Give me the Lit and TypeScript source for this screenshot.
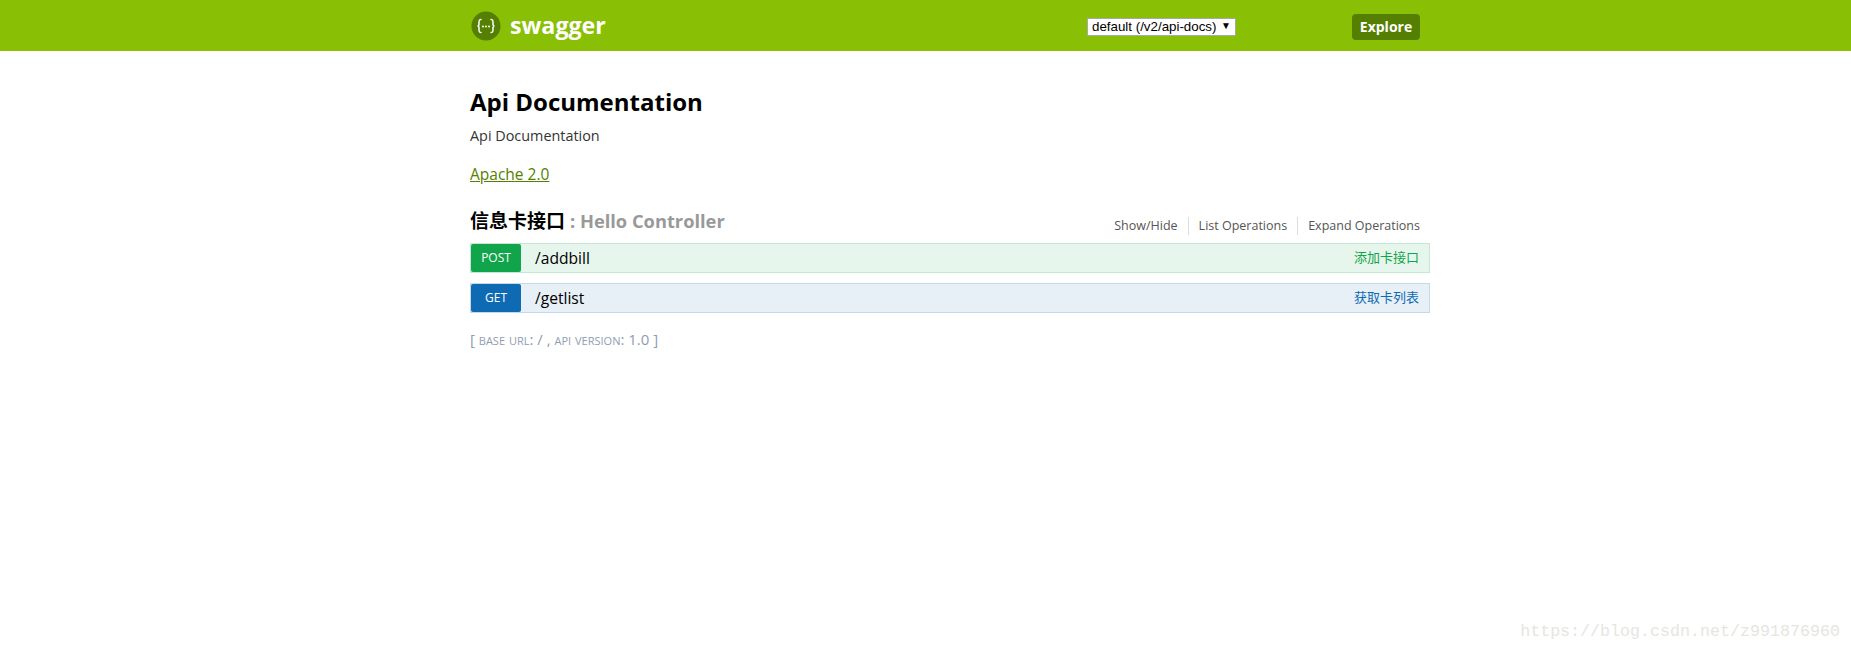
import { LitElement, html, css } from "lit";
import { customElement } from "lit/decorators.js";

@customElement("app-root")
export class AppRoot extends LitElement {
  static styles = css`
    :host {
      display: block;
      position: relative;
      min-height: 652px;
      background: #fff;
      font-family: "Open Sans", "Noto Sans", "Noto Sans CJK SC", sans-serif;
      color: #000;
      overflow: hidden;
    }
    .header {
      height: 51px;
      background: #89bf04;
      padding-left: 470px;
    }
    .header-in {
      width: 960px;
      height: 51px;
      display: flex;
      align-items: center;
      padding-left: 1px;
      box-sizing: border-box;
    }
    .logo { display: block; flex: none; }
    .brand {
      margin-left: 9px;
      color: #fff;
      font-size: 23.2px;
      font-weight: 700;
      line-height: 51px;
      margin-top: -1px;
      width: 577px;
    }
    .select {
      width: 149px;
      height: 18px;
      box-sizing: border-box;
      border: 1px solid #a9a9a9;
      background: #fff;
      font: 13.33px/16px "Liberation Sans", Arial, sans-serif;
      display: flex;
      justify-content: space-between;
      padding: 0 4px;
      margin-top: 3px;
      color: #000;
    }
    .arrow { font-size: 10px; line-height: 14px; }
    .explore {
      margin-left: 116px;
      width: 68px;
      height: 26px;
      border-radius: 4px;
      background: #547f00;
      color: #fff;
      font-size: 14px;
      font-weight: 700;
      line-height: 26px;
      text-align: center;
      margin-top: 3px;
    }
    .main { width: 960px; margin-left: 470px; padding-top: 34px; }
    h1 {
      margin: 0;
      font-size: 24px;
      font-weight: 700;
      line-height: 34px;
    }
    .desc { font-size: 14.4px; line-height: 20px; margin-top: 7px; color: #333; }
    .lic {
      display: inline-block;
      margin-top: 17px;
      font-size: 15.5px;
      line-height: 22px;
      color: #547f00;
      text-decoration: underline;
    }
    .res {
      display: flex;
      justify-content: space-between;
      align-items: flex-end;
      margin-top: 21px;
      height: 37px;
    }
    .res h2 { margin: 0; font-size: 19px; line-height: 26px; font-weight: 700; padding-bottom: 9px; }
    .res h2 span { color: #999; font-size: 18.3px; }
    .actions { display: flex; font-size: 12.5px; color: #555; line-height: 18px; padding-bottom: 8px; padding-right: 10px; }
    .actions span + span { border-left: 1px solid #ddd; margin-left: 10px; padding-left: 10px; }
    .op {
      display: flex;
      align-items: center;
      height: 30px;
      box-sizing: border-box;
      border: 1px solid;
    }
    .op + .op { margin-top: 10px; }
    .post { background: #e7f6ec; border-color: #c3e8d1; color: #10a54a; }
    .get { background: #e7f0f7; border-color: #c3d9ec; color: #0f6ab4; }
    .method {
      width: 50px;
      height: 28px;
      border-radius: 2px;
      color: #fff;
      font-size: 12px;
      line-height: 28px;
      text-align: center;
      flex: none;
    }
    .post .method { background: #10a54a; }
    .get .method { background: #0f6ab4; }
    .path { margin-left: 14px; font-size: 15.6px; color: #000; flex: 1; line-height: 22px; padding-bottom: 1px; }
    .sum { font-size: 13px; padding: 0 10px 2px 0; line-height: 20px; }
    .foot {
      margin-top: 14px;
      font-size: 15px;
      line-height: 24px;
      color: #8f9db3;
      font-variant: small-caps;
    }
    .wm {
      position: absolute;
      right: 11px;
      top: 621px;
      font: 16.67px/22px "Liberation Mono", monospace;
      color: #e6e6e0;
    }
  `;

  render() {
    return html`
      <div class="header">
        <div class="header-in">
          <svg class="logo" width="30" height="30" viewBox="0 0 30 30">
            <circle cx="15" cy="15" r="14.5" fill="#547f00" />
            <g fill="none" stroke="#fff" stroke-width="1.5" stroke-linecap="round">
              <path d="M10 8.5c-2 0-2 1-2 3v1.5c0 1.2-.7 2-1.5 2 .8 0 1.5.8 1.5 2v1.5c0 2 0 3 2 3" />
              <path d="M20 8.5c2 0 2 1 2 3v1.5c0 1.2.7 2 1.5 2-.8 0-1.5.8-1.5 2v1.5c0 2 0 3-2 3" />
            </g>
            <g fill="#fff">
              <circle cx="12" cy="15.6" r="1" />
              <circle cx="15" cy="15.6" r="1" />
              <circle cx="18" cy="15.6" r="1" />
            </g>
          </svg>
          <div class="brand">swagger</div>
          <div class="select"><span>default (/v2/api-docs)</span><span class="arrow">▼</span></div>
          <div class="explore">Explore</div>
        </div>
      </div>
      <div class="main">
        <h1>Api Documentation</h1>
        <div class="desc">Api Documentation</div>
        <a class="lic">Apache 2.0</a>
        <div class="res">
          <h2>信息卡接口 <span>: Hello Controller</span></h2>
          <div class="actions"><span>Show/Hide</span><span>List Operations</span><span>Expand Operations</span></div>
        </div>
        <div class="op post">
          <div class="method">POST</div>
          <div class="path">/addbill</div>
          <div class="sum">添加卡接口</div>
        </div>
        <div class="op get">
          <div class="method">GET</div>
          <div class="path">/getlist</div>
          <div class="sum">获取卡列表</div>
        </div>
        <div class="foot">[ base url: / , api version: 1.0 ]</div>
      </div>
      <div class="wm">https://blog.csdn.net/z991876960</div>
    `;
  }
}
